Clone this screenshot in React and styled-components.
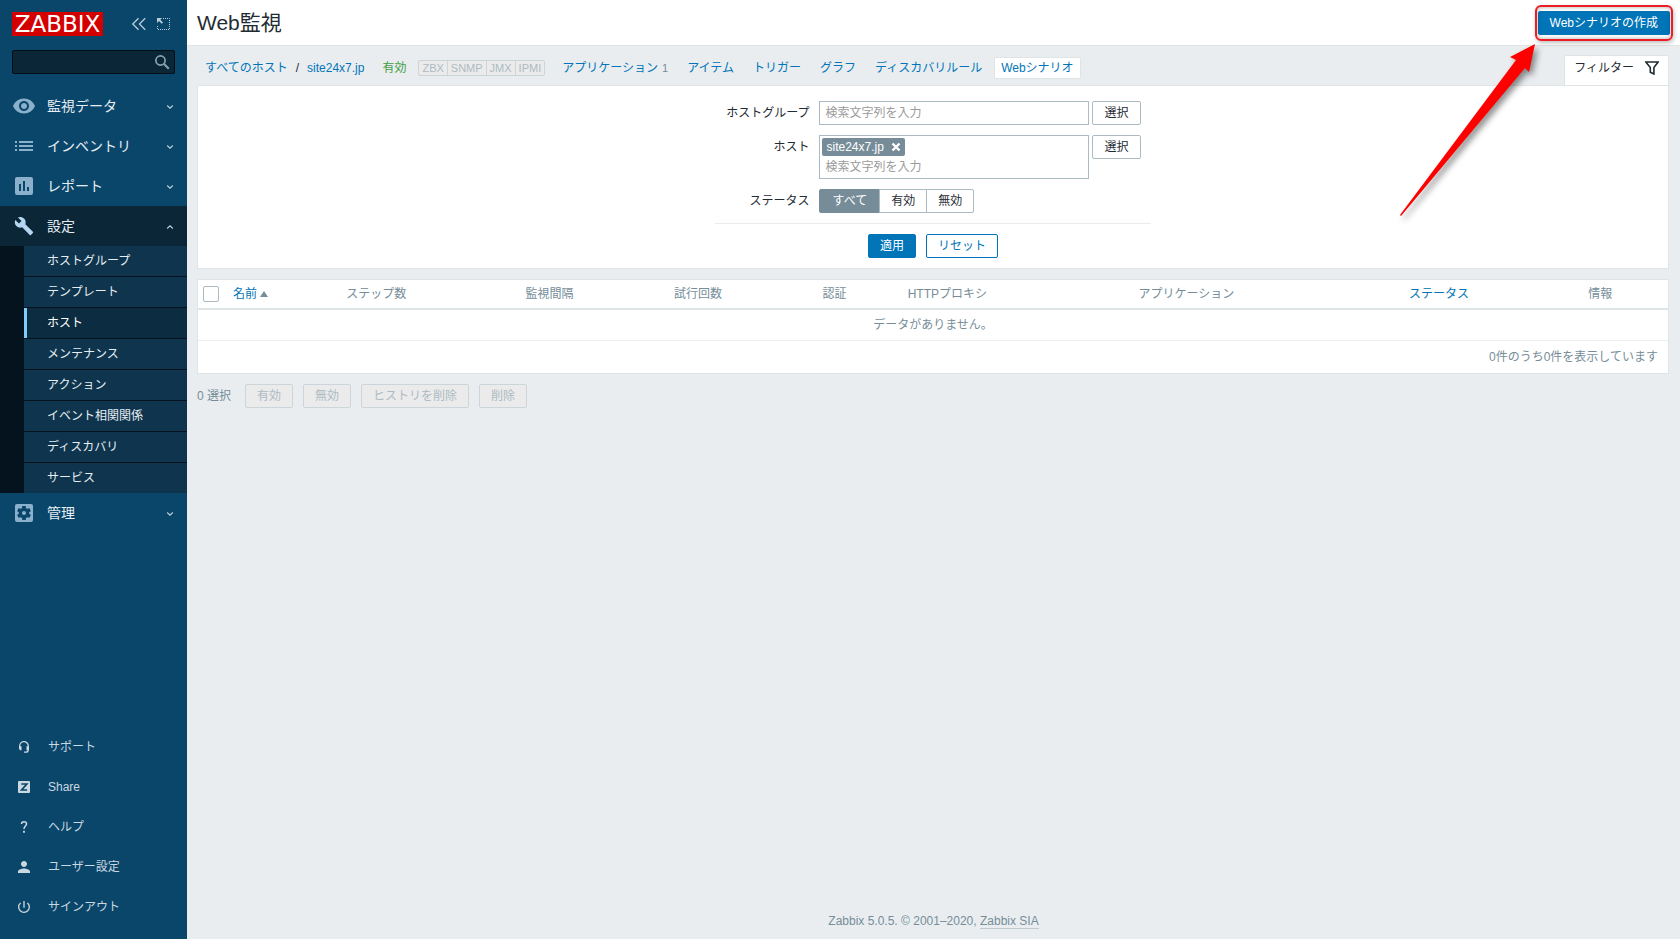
import React from 'react';
import styled, { createGlobalStyle, css } from 'styled-components';
import {
  MdVisibility,
  MdInsertChart,
  MdBuild,
  MdSettingsApplications,
  MdPerson,
  MdPowerSettingsNew,
} from 'react-icons/md';

const GlobalStyle = createGlobalStyle`
  * {
    box-sizing: border-box;
  }
  body {
    margin: 0;
    background: #e9edf0;
    color: #1f2c33;
    font-family: 'Liberation Sans', 'Noto Sans CJK JP', sans-serif;
    font-size: 12px;
    line-height: 18px;
  }
  button, input {
    font: inherit;
    color: inherit;
  }
  a {
    color: #0275b8;
    text-decoration: none;
  }
`;

const StyledPage = styled.div`
  display: flex;
  min-height: 100vh;
`;

/* sidebar */

const StyledSidebar = styled.aside`
  flex: 0 0 187px;
  min-width: 0;
  display: flex;
  flex-direction: column;
  padding-bottom: 12px;
  background: #0a466a;
`;

const StyledBrand = styled.div`
  display: flex;
  align-items: center;
  gap: 8px;
  padding: 12px 12px 0;
`;

const StyledLogo = styled.a`
  width: 91px;
  height: 24px;
  margin-right: 20px;
  background: #d40000;
  color: #ffffff;
  font-family: 'DejaVu Sans', sans-serif;
  font-size: 23px;
  line-height: 24px;
  text-align: center;
`;

const StyledIconButton = styled.button`
  display: flex;
  padding: 0;
  border: 0;
  background: none;
  color: #b9ccd8;
`;

const StyledSearch = styled.form`
  display: flex;
  align-items: center;
  height: 24px;
  margin: 14px 12px 12px;
  padding-right: 4px;
  border: 1px solid #020d14;
  border-radius: 2px;
  background: #0a2637;
  color: #87a3b4;

  input {
    flex: 1;
    width: 100%;
    min-width: 0;
    height: 22px;
    padding: 0 5px;
    border: 0;
    background: none;
    color: #ffffff;
  }
  button {
    display: flex;
    padding: 0;
    border: 0;
    background: none;
  }
`;

const StyledMenu = styled.nav`
  flex: 1;
`;

const StyledMenuItem = styled.a`
  display: flex;
  align-items: center;
  height: 40px;
  padding: 0 13px 0 12px;
  font-size: 14px;
  color: #e6eef3;
  background: ${({ $open }) => ($open ? '#0a2637' : 'none')};

  span {
    flex: 1;
    margin-left: 11px;
  }
  > svg:first-child {
    color: ${({ $open }) => ($open ? '#b5d6f0' : '#8bb0cb')};
  }
`;

const StyledSubmenu = styled.div`
  display: flex;
  flex-direction: column;
  gap: 1px;
  padding-left: 24px;
  background: #04131d;
`;

const StyledSubmenuItem = styled.a`
  height: 30px;
  padding-left: 20px;
  border-left: 3px solid ${({ $active }) => ($active ? '#80ccff' : '#0f344d')};
  background: ${({ $active }) => ($active ? '#0b2c41' : '#0f344d')};
  color: ${({ $active }) => ($active ? '#ffffff' : '#e6eef3')};
  line-height: 30px;
`;

const StyledUserItem = styled.a`
  display: flex;
  align-items: center;
  gap: 15px;
  height: 40px;
  padding-left: 15px;
  color: #c9d8e1;

  svg {
    flex: 0 0 18px;
  }
`;

/* content */

const StyledMain = styled.main`
  flex: 1;
  min-width: 0;
  display: flex;
  flex-direction: column;
`;

const StyledHeader = styled.header`
  display: flex;
  align-items: center;
  justify-content: space-between;
  height: 46px;
  padding: 0 10px;
  border-bottom: 1px solid #dfe4e7;
  background: #ffffff;

  h1 {
    margin: 0;
    font-size: 21px;
    font-weight: 400;
    line-height: 24px;
  }
`;

const variants = {
  primary: css`
    border-color: #0275b8;
    background: #0275b8;
    color: #ffffff;
  `,
  outline: css`
    border-color: #0275b8;
    background: #ffffff;
    color: #0275b8;
  `,
  grey: css`
    border-color: #acbbc2;
    background: #ffffff;
    color: #1f2c33;
  `,
  disabled: css`
    border-color: #ccd5d9;
    background: #ebebeb;
    color: #acbbc2;
  `,
};

const StyledButton = styled.button`
  height: 24px;
  padding: 0 11px;
  border: 1px solid;
  border-radius: 2px;
  line-height: 22px;
  white-space: nowrap;
  ${({ $variant }) => variants[$variant]}
`;

const StyledHighlight = styled.div`
  position: relative;

  &::after {
    content: '';
    position: absolute;
    inset: -6px -3px;
    border: 2px solid #ec1c24;
    border-radius: 6px;
    box-shadow: 1px 2px 4px rgba(0, 0, 0, 0.25), inset 0 0 4px rgba(0, 0, 0, 0.35);
    pointer-events: none;
  }
`;

const StyledArrow = styled.svg`
  position: absolute;
  top: 32px;
  right: 130px;
  z-index: 1;
  filter: drop-shadow(3px 4px 3px rgba(0, 0, 0, 0.45));
  pointer-events: none;
`;

const StyledToolbar = styled.div`
  display: flex;
  align-items: center;
  height: 39px;
  padding: 4px 11px 0 18px;
`;

const StyledCrumbs = styled.div`
  display: flex;
  gap: 8px;
`;

const StyledEnabled = styled.span`
  margin: 0 12px 0 18px;
  color: #429e47;
`;

const StyledBadges = styled.div`
  display: flex;
  margin-right: 10px;
  border: 1px solid #ccd5d9;
  border-radius: 2px;
  background: #ebebeb;
  color: #acbbc2;
  font-size: 11px;
  line-height: 14px;

  span {
    padding: 0 3px;
  }
  span + span {
    border-left: 1px solid #ccd5d9;
  }
`;

const StyledTabs = styled.nav`
  display: flex;
  gap: 5px;
`;

const StyledTab = styled.a`
  padding: 1px 6px;
  border: 1px solid ${({ $active }) => ($active ? '#dfe4e7' : 'transparent')};
  border-radius: 2px;
  background: ${({ $active }) => ($active ? '#ffffff' : 'none')};

  sup {
    margin-left: 4px;
    color: #768d99;
    font-size: 11px;
    line-height: 18px;
    vertical-align: baseline;
  }
`;

const StyledFilterTab = styled.a`
  display: flex;
  align-items: center;
  align-self: flex-end;
  gap: 11px;
  height: 31px;
  margin: 0 0 -1px auto;
  padding: 0 9px 6px;
  border: 1px solid #dfe4e7;
  border-bottom: 0;
  border-radius: 2px 2px 0 0;
  background: #ffffff;
  color: #1f2c33;
`;

const StyledFilter = styled.form`
  display: flex;
  justify-content: center;
  margin: 0 11px 10px 10px;
  padding: 15px 10px 10px;
  border: 1px solid #dfe4e7;
  background: #ffffff;
`;

const StyledFields = styled.div`
  display: grid;
  grid-template-columns: 94px auto;
  gap: 10px;
  padding-right: 10px;
  align-items: start;
`;

const StyledFormBody = styled.div`
  display: flex;
  flex-direction: column;
`;

const StyledLabel = styled.label`
  line-height: 24px;
  text-align: right;
`;

const StyledField = styled.div`
  display: flex;
  align-items: flex-start;
  gap: 3px;
`;

const StyledMultiselect = styled.div`
  width: 270px;
  padding: 2px;
  border: 1px solid #acbbc2;
  background: #ffffff;

  input {
    display: block;
    width: 100%;
    height: 18px;
    padding: 0 3px;
    border: 0;
  }
  input::placeholder {
    color: #9b9b9b;
  }
`;

const StyledTag = styled.span`
  display: inline-flex;
  align-items: center;
  gap: 7px;
  height: 18px;
  margin-bottom: 2px;
  padding: 0 4px;
  border-radius: 2px;
  background: #768d99;
  color: #ffffff;
  vertical-align: top;

  button {
    display: flex;
    padding: 0;
    border: 0;
    background: none;
  }
`;

const StyledSegments = styled.div`
  display: flex;
`;

const StyledSegment = styled.label`
  height: 24px;
  padding: 0 ${({ $wide }) => ($wide ? '12px' : '11px')};
  margin-right: -1px;
  border: 1px solid #acbbc2;
  background: #ffffff;
  line-height: 22px;

  &:has(input:checked) {
    border-color: #768d99;
    background: #768d99;
    color: #ffffff;
  }
  &:first-child {
    border-radius: 2px 0 0 2px;
  }
  &:last-child {
    border-radius: 0 2px 2px 0;
  }
  input {
    position: absolute;
    opacity: 0;
    width: 1px;
    height: 1px;
    margin: 0;
  }
`;

const StyledFormButtons = styled.div`
  display: flex;
  justify-content: center;
  gap: 10px;
  margin-top: 10px;
  padding-top: 10px;
  border-top: 1px solid #ebebeb;
`;

const StyledTable = styled.table`
  width: 100%;
  table-layout: fixed;
  border-collapse: collapse;
  color: #768d99;

  th {
    height: 29px;
    padding: 0 5px;
    border-bottom: 2px solid #dfe4e7;
    font-weight: 400;
    text-align: left;
    white-space: nowrap;
  }
  td {
    height: 31px;
    padding: 0 10px;
    text-align: center;
  }
  tfoot td {
    height: 33px;
    border-top: 1px solid #ebeef0;
    text-align: right;
  }
`;

const StyledTableWrap = styled.div`
  margin: 0 11px 10px 10px;
  border: 1px solid #dfe4e7;
  background: #ffffff;
`;

const StyledCheckbox = styled.input`
  appearance: none;
  display: block;
  width: 16px;
  height: 16px;
  margin: 0;
  border: 1px solid #acbbc2;
  border-radius: 2px;
  background: #ffffff;
`;

const StyledSort = styled.a`
  display: flex;
  align-items: center;
  gap: 3px;
  color: #0275b8;

  svg {
    color: #768d99;
  }
`;

const StyledActions = styled.div`
  display: flex;
  align-items: center;
  gap: 10px;
  padding: 0 10px;
  color: #768d99;

  span {
    margin-right: 4px;
  }
`;

const StyledFooter = styled.footer`
  margin-top: auto;
  padding-bottom: 9px;
  color: #768d99;
  text-align: center;

  a {
    border-bottom: 1px solid #c0c9ce;
    color: inherit;
  }
`;

const Chevron = ({ up }) => (
  <svg width="8" height="8" viewBox="0 0 8 8" fill="none" stroke="#b9ccd8" strokeWidth="1.2">
    <path d={up ? 'M1.2 6.5l2.8-2.6 2.8 2.6' : 'M1.2 3.5l2.8 2.6 2.8-2.6'} />
  </svg>
);

const ListIcon = () => (
  <svg width="24" height="24" viewBox="0 0 24 24" fill="currentColor">
    <path d="M3 7h2v2H3zM7 7h14v2H7zM3 11h2v2H3zM7 11h14v2H7zM3 15h2v2H3zM7 15h14v2H7z" />
  </svg>
);

const WrenchIcon = () => (
  <svg width="24" height="24" viewBox="-2.4 -2.4 28.8 28.8">
    <MdBuild size={24} />
  </svg>
);

const SupportIcon = () => (
  <svg width="18" height="18" viewBox="0 0 18 18" fill="none" stroke="currentColor">
    <path d="M4.7 9V8a4.3 4.3 0 0 1 8.6 0v3.5c0 1.6-.8 2.7-2.3 2.7H9" strokeWidth="1.3" />
    <path d="M4 8.2h2.5v4H5.2L4 11zM14 8.2h-2.5v4h1.3L14 11z" fill="currentColor" stroke="none" />
  </svg>
);

const ShareIcon = () => (
  <svg width="18" height="18" viewBox="0 0 18 18">
    <rect x="3" y="3" width="12" height="12" rx="1" fill="currentColor" />
    <path d="M6.3 6h5.5L6.6 12h5.5" fill="none" stroke="#0a466a" strokeWidth="1.7" />
  </svg>
);

const HelpIcon = () => (
  <svg width="18" height="18" viewBox="0 0 18 18" fill="none" stroke="currentColor" strokeWidth="1.5">
    <path d="M6.5 6.1c0-1.5 1-2.4 2.5-2.4s2.5.9 2.5 2.2c0 1.9-2.5 2.3-2.5 5" />
    <path d="M8.1 13.8h1.8" strokeWidth="2" />
  </svg>
);

const SearchIcon = () => (
  <svg width="16" height="16" viewBox="0 0 16 16" fill="none" stroke="currentColor">
    <circle cx="6.5" cy="6.5" r="4.6" strokeWidth="1.7" />
    <path d="M10 10l4.8 4.8" strokeWidth="2" />
  </svg>
);

const menu = [
  { label: '監視データ', icon: <MdVisibility size={24} /> },
  { label: 'インベントリ', icon: <ListIcon /> },
  { label: 'レポート', icon: <MdInsertChart size={24} /> },
  {
    label: '設定',
    icon: <WrenchIcon />,
    children: [
      'ホストグループ',
      'テンプレート',
      'ホスト',
      'メンテナンス',
      'アクション',
      'イベント相関関係',
      'ディスカバリ',
      'サービス',
    ],
  },
  { label: '管理', icon: <MdSettingsApplications size={24} /> },
];

const userMenu = [
  { label: 'サポート', icon: <SupportIcon /> },
  { label: 'Share', icon: <ShareIcon /> },
  { label: 'ヘルプ', icon: <HelpIcon /> },
  { label: 'ユーザー設定', icon: <MdPerson size={18} /> },
  { label: 'サインアウト', icon: <MdPowerSettingsNew size={16} /> },
];

const tabs = [
  { label: 'アプリケーション', count: 1 },
  { label: 'アイテム' },
  { label: 'トリガー' },
  { label: 'グラフ' },
  { label: 'ディスカバリルール' },
  { label: 'Webシナリオ', active: true },
];

const columns = [
  { label: 'ステップ数', width: '12.2%' },
  { label: '監視間隔', width: '10.1%' },
  { label: '試行回数', width: '10.1%' },
  { label: '認証', width: '5.8%' },
  { label: 'HTTPプロキシ', width: '15.7%' },
  { label: 'アプリケーション', width: '18.4%' },
  { label: 'ステータス', width: '12.2%', sortable: true },
  { label: '情報' },
];

const Sidebar = () => (
  <StyledSidebar>
    <StyledBrand>
      <StyledLogo href="#">ZABBIX</StyledLogo>
      <StyledIconButton type="button" aria-label="サイドバーを縮小">
        <svg width="16" height="14" viewBox="0 0 16 14" fill="none" stroke="currentColor" strokeWidth="1.3">
          <path d="M7.5 1.2L1.8 7l5.7 5.8M14.2 1.2L8.5 7l5.7 5.8" />
        </svg>
      </StyledIconButton>
      <StyledIconButton type="button" aria-label="サイドバーを隠す">
        <svg width="16" height="14" viewBox="0 0 16 14" fill="none" stroke="currentColor">
          <path d="M8 1.5h6.5v11h-12V8" strokeDasharray="1 1" />
          <path d="M2 1h5L5.3 2.7l2.7 2.7-1.3 1.3L4 4 2 6z" fill="currentColor" stroke="none" />
        </svg>
      </StyledIconButton>
    </StyledBrand>
    <StyledSearch role="search">
      <input type="text" aria-label="検索" />
      <button type="button" aria-label="検索">
        <SearchIcon />
      </button>
    </StyledSearch>
    <StyledMenu>
      {menu.map((item) => (
        <React.Fragment key={item.label}>
          <StyledMenuItem href="#" $open={Boolean(item.children)}>
            {item.icon}
            <span>{item.label}</span>
            <Chevron up={Boolean(item.children)} />
          </StyledMenuItem>
          {item.children && (
            <StyledSubmenu>
              {item.children.map((label) => (
                <StyledSubmenuItem key={label} href="#" $active={label === 'ホスト'}>
                  {label}
                </StyledSubmenuItem>
              ))}
            </StyledSubmenu>
          )}
        </React.Fragment>
      ))}
    </StyledMenu>
    {userMenu.map((item) => (
      <StyledUserItem key={item.label} href="#">
        {item.icon}
        {item.label}
      </StyledUserItem>
    ))}
  </StyledSidebar>
);

const Toolbar = () => (
  <StyledToolbar>
    <StyledCrumbs>
      <a href="#">すべてのホスト</a>
      <span>/</span>
      <a href="#">site24x7.jp</a>
    </StyledCrumbs>
    <StyledEnabled>有効</StyledEnabled>
    <StyledBadges>
      {['ZBX', 'SNMP', 'JMX', 'IPMI'].map((label) => (
        <span key={label}>{label}</span>
      ))}
    </StyledBadges>
    <StyledTabs>
      {tabs.map((tab) => (
        <StyledTab key={tab.label} href="#" $active={tab.active}>
          {tab.label}
          {tab.count && <sup>{tab.count}</sup>}
        </StyledTab>
      ))}
    </StyledTabs>
    <StyledFilterTab href="#">
      フィルター
      <svg width="14" height="14" viewBox="0 0 14 14" fill="none" stroke="currentColor" strokeWidth="1.6">
        <path d="M.8 1h12.4L8.9 6.5V13L5.3 11.2V6.5z" />
      </svg>
    </StyledFilterTab>
  </StyledToolbar>
);

const Filter = () => (
  <StyledFilter>
    <StyledFormBody>
      <StyledFields>
        <StyledLabel htmlFor="groups">ホストグループ</StyledLabel>
        <StyledField>
          <StyledMultiselect>
            <input id="groups" type="text" placeholder="検索文字列を入力" />
          </StyledMultiselect>
          <StyledButton type="button" $variant="grey">選択</StyledButton>
        </StyledField>
        <StyledLabel htmlFor="hosts">ホスト</StyledLabel>
        <StyledField>
          <StyledMultiselect>
            <StyledTag>
              site24x7.jp
              <button type="button" aria-label="削除">
                <svg width="10" height="10" viewBox="0 0 10 10" stroke="currentColor" strokeWidth="2.4">
                  <path d="M1.5 1.5l7 7M8.5 1.5l-7 7" />
                </svg>
              </button>
            </StyledTag>
            <input id="hosts" type="text" placeholder="検索文字列を入力" />
          </StyledMultiselect>
          <StyledButton type="button" $variant="grey">選択</StyledButton>
        </StyledField>
        <StyledLabel as="span" id="status">ステータス</StyledLabel>
        <StyledSegments role="radiogroup" aria-labelledby="status">
          <StyledSegment $wide>
            <input type="radio" name="status" defaultChecked />
            すべて
          </StyledSegment>
          <StyledSegment>
            <input type="radio" name="status" />
            有効
          </StyledSegment>
          <StyledSegment>
            <input type="radio" name="status" />
            無効
          </StyledSegment>
        </StyledSegments>
      </StyledFields>
      <StyledFormButtons>
        <StyledButton type="button" $variant="primary">適用</StyledButton>
        <StyledButton type="reset" $variant="outline">リセット</StyledButton>
      </StyledFormButtons>
    </StyledFormBody>
  </StyledFilter>
);

const ScenarioTable = () => (
  <StyledTableWrap>
    <StyledTable>
      <colgroup>
        <col width="30" />
        <col width="7.7%" />
        {columns.map((column) => (
          <col key={column.label} width={column.width} />
        ))}
      </colgroup>
      <thead>
        <tr>
          <th>
            <StyledCheckbox type="checkbox" aria-label="すべて選択" />
          </th>
          <th>
            <StyledSort href="#">
              名前
              <svg width="8" height="6" viewBox="0 0 8 6" fill="currentColor">
                <path d="M4 0l4 6H0z" />
              </svg>
            </StyledSort>
          </th>
          {columns.map((column) => (
            <th key={column.label}>
              {column.sortable ? <a href="#">{column.label}</a> : column.label}
            </th>
          ))}
        </tr>
      </thead>
      <tbody>
        <tr>
          <td colSpan={10}>データがありません。</td>
        </tr>
      </tbody>
      <tfoot>
        <tr>
          <td colSpan={10}>0件のうち0件を表示しています</td>
        </tr>
      </tfoot>
    </StyledTable>
  </StyledTableWrap>
);

const App = () => (
  <>
    <GlobalStyle />
    <StyledPage>
      <Sidebar />
      <StyledMain>
        <StyledHeader>
          <h1>Web監視</h1>
          <StyledHighlight>
            <StyledButton type="button" $variant="primary">Webシナリオの作成</StyledButton>
          </StyledHighlight>
        </StyledHeader>
        <Toolbar />
        <Filter />
        <ScenarioTable />
        <StyledActions>
          <span>0 選択</span>
          {['有効', '無効', 'ヒストリを削除', '削除'].map((label) => (
            <StyledButton key={label} type="button" disabled $variant="disabled">
              {label}
            </StyledButton>
          ))}
        </StyledActions>
        <StyledFooter>
          Zabbix 5.0.5. © 2001–2020, <a href="#">Zabbix SIA</a>
        </StyledFooter>
      </StyledMain>
    </StyledPage>
    <StyledArrow width="150" height="196" viewBox="0 0 150 196">
      <path d="M135 12L110 25l6 3L0 183l1 1L125 36l4 4z" fill="#ff0000" />
    </StyledArrow>
  </>
);

export default App;
